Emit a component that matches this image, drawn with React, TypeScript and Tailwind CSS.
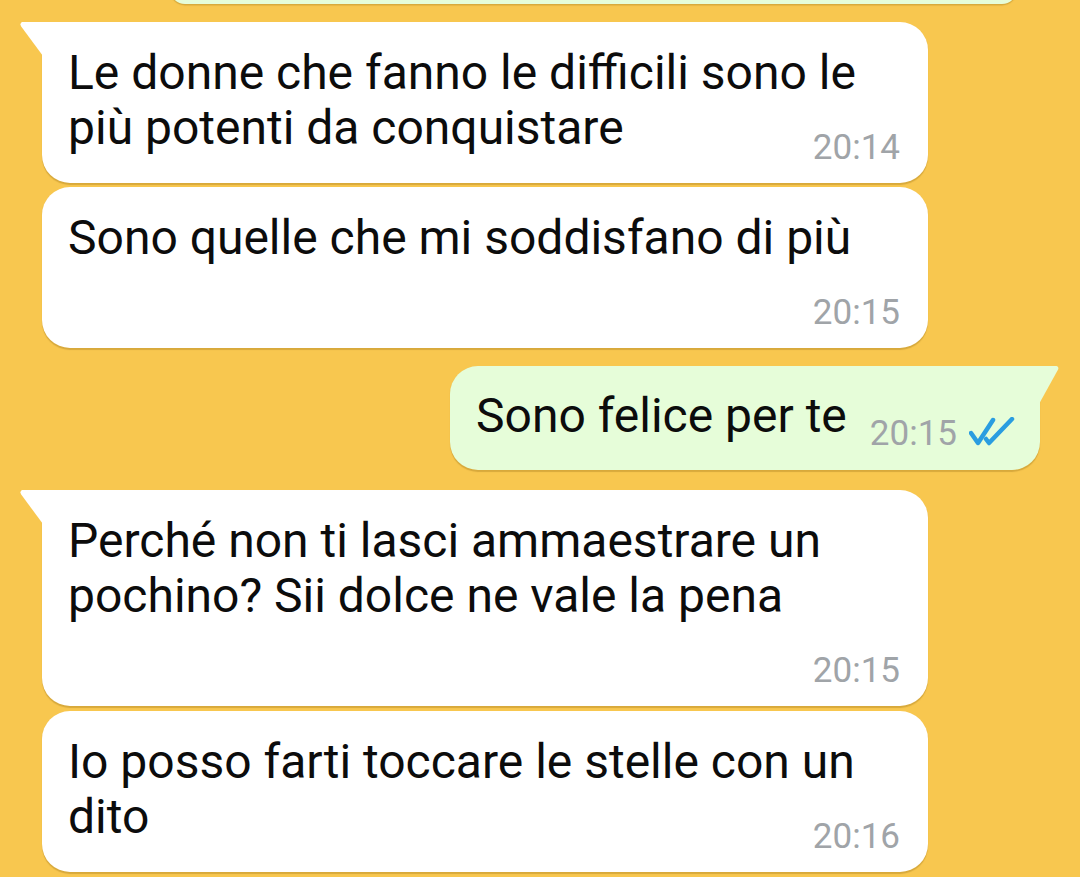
import React from 'react';

const font = { fontFamily: 'Roboto, "Noto Sans", sans-serif' };

const IncomingTail = () => (
    <svg className="absolute -left-[22px] top-0" width="23" height="34" viewBox="0 0 23 34">
        <path d="M2 0 H23 V34 L1.2 4.6 Q-0.6 1.2 2 0 Z" fill="#ffffff" />
    </svg>
);

const OutgoingTail = () => (
    <svg className="absolute -right-[19px] top-0" width="20" height="38" viewBox="0 0 20 38">
        <path d="M0 0 H17.5 Q20.5 0.6 18.8 4 L0 38 Z" fill="#e6fdd9" />
    </svg>
);

const DoubleCheck = () => (
    <svg width="46" height="30" viewBox="0 0 46 30" fill="none" stroke="#2a9de0" strokeWidth="4.5" strokeLinecap="round" strokeLinejoin="round">
        <path d="M2 16 L9 26 L24 3" />
        <path d="M17 22 L20 26 L43 2" />
    </svg>
);

type Msg = {
    lines: string[];
    time: string;
    tail?: boolean;
    inline?: boolean;
    gap: string;
};

const Incoming: React.FC<Msg> = ({ lines, time, tail, inline, gap }) => (
    <div
        className={`relative ml-[42px] w-[886px] rounded-[28px] bg-white pl-[26px] pr-[28px] pt-[23px] pb-[15px] shadow-[0_1.5px_1px_rgba(120,80,0,0.25)] ${tail ? 'rounded-tl-none' : ''} ${gap}`}
    >
        {tail && <IncomingTail />}
        <div className="text-[48px] leading-[55px] text-[#0c0c0c]">
            {lines.map((l) => (
                <div key={l} className="whitespace-nowrap">{l}</div>
            ))}
        </div>
        <div className={`flex justify-end text-[35px] leading-[41px] text-[#a0a4a8] ${inline ? '-mt-[28px]' : 'mt-[27px]'}`}>
            {time}
        </div>
    </div>
);

export default function App() {
    return (
        <div className="h-[877px] w-[1080px] overflow-hidden bg-[#f8c74f]" style={font}>
            {/* previous outgoing bubble, cut off at the top */}
            <div className="-mt-[26px] ml-[170px] h-[30px] w-[847px] rounded-[28px] bg-[#e6fdd9] shadow-[0_1.5px_1px_rgba(120,80,0,0.25)]" />

            <Incoming
                gap="mt-[18px]"
                tail
                inline
                lines={['Le donne che fanno le difficili sono le', 'più potenti da conquistare']}
                time="20:14"
            />
            <Incoming gap="mt-[4px]" lines={['Sono quelle che mi soddisfano di più']} time="20:15" />

            <div className="mt-[18px] flex justify-end pr-[40px]">
                <div className="relative flex items-start rounded-[28px] rounded-tr-none bg-[#e6fdd9] pl-[26px] pr-[25px] pt-[22px] pb-[16px] shadow-[0_1.5px_1px_rgba(120,80,0,0.25)]">
                    <OutgoingTail />
                    <div className="whitespace-nowrap text-[48px] leading-[55px] text-[#0c0c0c]">Sono felice per te</div>
                    <div className="ml-[23px] mt-[25px] flex items-center text-[35px] leading-[41px] text-[#a0a4a8]">
                        <span>20:15</span>
                        <span className="ml-[12px] -mt-[4px]">
                            <DoubleCheck />
                        </span>
                    </div>
                </div>
            </div>

            <Incoming
                gap="mt-[20px]"
                tail
                lines={['Perché non ti lasci ammaestrare un', 'pochino? Sii dolce ne vale la pena']}
                time="20:15"
            />
            <Incoming
                gap="mt-[5px]"
                inline
                lines={['Io posso farti toccare le stelle con un', 'dito']}
                time="20:16"
            />
        </div>
    );
}
